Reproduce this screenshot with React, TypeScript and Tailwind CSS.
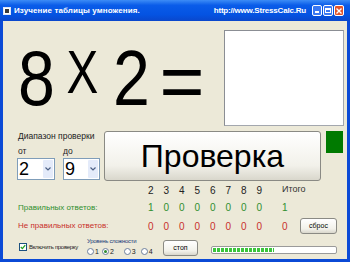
const COLS = ["2", "3", "4", "5", "6", "7", "8", "9"];
const RIGHT = ["1", "0", "0", "0", "0", "0", "0", "0"];
const WRONG = ["0", "0", "0", "0", "0", "0", "0", "0"];

function TitleBar() {
  return (
    <div className="flex h-[21px] items-center bg-[linear-gradient(to_bottom,#3d8cf6_0%,#0a5ce9_25%,#0453e2_70%,#0a47cc_100%)] pl-[3px] pr-[6px]">
      <div className="flex h-[8px] w-[8px] items-center justify-center border border-[#dfe6f5] bg-white">
        <div className="h-[4px] w-[4px] bg-[#3a3a3a]" />
      </div>
      <span className="ml-[3px] text-[8px] font-bold tracking-[0.1px] whitespace-nowrap text-white">
        Изучение таблицы умножения.
      </span>
      <span className="ml-auto text-[8px] font-bold tracking-[-0.2px] whitespace-nowrap text-white">
        http://www.StressCalc.Ru
      </span>
      <div className="ml-[6px] flex gap-[1px]">
        <div className="flex h-[11px] w-[10px] items-end rounded-[2px] border border-white bg-[#3a78f2] p-[2px]">
          <div className="h-[2px] w-[4px] bg-white" />
        </div>
        <div className="flex h-[11px] w-[10px] items-center justify-center rounded-[2px] border border-white bg-[#3a78f2]">
          <div className="h-[5px] w-[6px] border border-t-2 border-white" />
        </div>
        <div className="flex h-[11px] w-[10px] items-center justify-center rounded-[2px] border border-white bg-[#e1532b]">
          <svg width="6" height="6" viewBox="0 0 6 6">
            <path d="M0.5 0.5 L5.5 5.5 M5.5 0.5 L0.5 5.5" stroke="#fff" strokeWidth="1.4" />
          </svg>
        </div>
      </div>
    </div>
  );
}

function Combo({ value, width }: { value: string; width: string }) {
  return (
    <div className={`flex h-[22px] ${width} items-stretch border border-[#7f9db9] bg-white`}>
      <span className="flex-1 pl-[1px] text-[18px] leading-[20px] text-black">{value}</span>
      <div className="m-[1px] flex w-[10px] items-center justify-center rounded-[1px] bg-[#e4ebfa]">
        <svg width="6" height="4" viewBox="0 0 6 4">
          <path d="M0.5 0.5 L3 3 L5.5 0.5" fill="none" stroke="#4d6185" strokeWidth="1.2" />
        </svg>
      </div>
    </div>
  );
}

function XpButton({ label, className }: { label: string; className: string }) {
  return (
    <div
      className={`flex items-center justify-center rounded-[3px] border border-[#8a8a84] bg-[linear-gradient(to_bottom,#ffffff,#f2f1ea_70%,#d9d7cc)] whitespace-nowrap text-black ${className}`}
    >
      {label}
    </div>
  );
}

function Radio({ checked = false }: { checked?: boolean }) {
  return (
    <div className="flex h-[7px] w-[7px] items-center justify-center rounded-full border border-[#6e7f9c] bg-white">
      {checked && <div className="h-[3px] w-[3px] rounded-full bg-[#2f8a2f]" />}
    </div>
  );
}

export default function App() {
  return (
    <div className="flex h-[262px] w-[350px] flex-col overflow-hidden bg-[#0b4ad6] font-['Liberation_Sans',Arial,sans-serif]">
      <TitleBar />
      <div className="mx-[3px] mb-[3px] flex flex-1 flex-col bg-[#ece9d8]">
        {/* big expression + answer box */}
        <div className="flex h-[105px] items-start">
          <div className="flex w-[221px] items-start text-black">
            <div className="mt-[19px] ml-[11px] flex w-[44px] justify-center text-[77px] leading-none">
              <span className="scale-x-[0.86]">8</span>
            </div>
            <div className="mt-[21px] ml-[4px] flex w-[40px] justify-center text-[61px] leading-none">
              <span className="scale-x-[0.78]">X</span>
            </div>
            <div className="mt-[19px] ml-[7px] flex w-[44px] justify-center text-[77px] leading-none">
              <span className="scale-x-[0.86]">2</span>
            </div>
            <div className="mt-[22px] ml-[7px] flex w-[44px] justify-center text-[77px] leading-none">
              <span>=</span>
            </div>
          </div>
          <div className="mt-[9px] h-[96px] w-[120px] border border-[#a3a7ae] border-t-[#8b8e94] border-l-[#8b8e94] bg-white" />
        </div>

        {/* range + check button */}
        <div className="flex items-start">
          <div className="flex w-[97px] flex-col pl-[14px]">
            <span className="mt-[5px] pl-[1px] text-[8.5px] leading-[10px] whitespace-nowrap text-[#222]">Диапазон проверки</span>
            <div className="mt-[5px] flex text-[8.5px] leading-[10px] text-[#222]">
              <span className="w-[46px] pl-[1px]">от</span>
              <span>до</span>
            </div>
            <div className="mt-[2px] flex gap-[8px]">
              <Combo value="2" width="w-[38px]" />
              <Combo value="9" width="w-[37px]" />
            </div>
          </div>
          <XpButton label="Проверка" className="mt-[5px] ml-[4px] h-[50px] w-[217px] text-[32px]" />
          <div className="mt-[5px] ml-[5px] h-[22px] w-[17px] bg-[#007a00]" />
        </div>

        {/* stats table */}
        <div className="flex h-[18px] items-center text-[10px] text-[#222]">
          <div className="w-[140px]" />
          {COLS.map((c) => (
            <span key={c} className="w-[15.5px] text-center">
              {c}
            </span>
          ))}
          <span className="ml-[15px] text-[9px] text-[#333]">Итого</span>
        </div>
        <div className="flex h-[17px] items-center text-[10px] text-[#2f8f2f]">
          <span className="w-[140px] pl-[15px] text-[8px] whitespace-nowrap">Правильных ответов:</span>
          {RIGHT.map((v, i) => (
            <span key={i} className="w-[15.5px] text-center">
              {v}
            </span>
          ))}
          <span className="ml-[15px]">1</span>
        </div>
        <div className="flex h-[20px] items-center text-[10px] text-[#c8302c]">
          <span className="w-[140px] pl-[15px] text-[8px] whitespace-nowrap">Не правильных ответов:</span>
          {WRONG.map((v, i) => (
            <span key={i} className="w-[15.5px] text-center">
              {v}
            </span>
          ))}
          <span className="ml-[15px] w-[18px]">0</span>
          <XpButton label="сброс" className="h-[16px] w-[37px] text-[7px]" />
        </div>

        {/* bottom controls */}
        <div className="flex items-start">
          <div className="mt-[7px] ml-[16px] flex w-[68px] items-center">
            <div className="flex h-[8px] w-[8px] shrink-0 items-center justify-center border border-[#1c5180] bg-white">
              <svg width="6" height="6" viewBox="0 0 6 6">
                <path d="M0.8 3 L2.4 4.6 L5.2 1.2" fill="none" stroke="#21a121" strokeWidth="1.3" />
              </svg>
            </div>
            <span className="ml-[2px] text-[6px] leading-none tracking-[-0.3px] whitespace-nowrap text-[#222]">
              Включить проверку
            </span>
          </div>
          <div className="flex w-[76px] flex-col">
            <span className="mt-[2px] text-[6px] leading-[7px] tracking-[-0.3px] whitespace-nowrap text-[#223c7a]">
              Уровень сложности
            </span>
            <div className="mt-[3px] flex items-center text-[7px] leading-none text-[#222]">
              <Radio />
              <span className="ml-[1px]">1</span>
              <div className="ml-[3px]">
                <Radio checked />
              </div>
              <span className="ml-[1px]">2</span>
              <div className="ml-[10px]">
                <Radio />
              </div>
              <span className="ml-[1px]">3</span>
              <div className="ml-[5px]">
                <Radio />
              </div>
              <span className="ml-[1px]">4</span>
            </div>
          </div>
          <XpButton label="стоп" className="mt-[4px] h-[16px] w-[35px] text-[7px]" />
          <div className="mt-[10px] ml-[13px] flex h-[8px] w-[126px] rounded-[2px] border border-[#9a9a9a] bg-white p-[1px]">
            <div className="h-full w-[61px] bg-[repeating-linear-gradient(90deg,#3cc43c_0_3px,transparent_3px_4px)]" />
          </div>
        </div>
      </div>
    </div>
  );
}
